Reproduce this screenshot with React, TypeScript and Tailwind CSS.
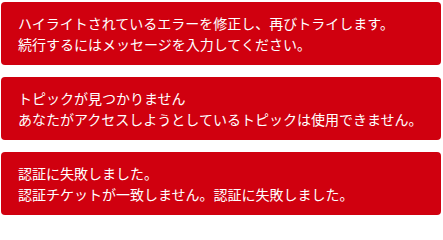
const messages = [
	[
		"ハイライトされているエラーを修正し、再びトライします。",
		"続行するにはメッセージを入力してください。",
	],
	[
		"トピックが見つかりません",
		"あなたがアクセスしようとしているトピックは使用できません。",
	],
	["認証に失敗しました。", "認証チケットが一致しません。認証に失敗しました。"],
];

const App = () => {
	return (
		<div className="w-[443px] h-[216px] bg-white pt-[2px] pl-[1px] pr-[2px] flex flex-col gap-[12px] font-['Noto_Sans_CJK_JP','Noto_Sans',sans-serif] overflow-hidden">
			{messages.map((lines, i) => (
				<div
					key={i}
					className="bg-[#d0000f] text-white rounded-[4px] px-[17px] py-[10.5px] text-[14px] leading-[21px]"
				>
					{lines.map((line, j) => (
						<p key={j}>{line}</p>
					))}
				</div>
			))}
		</div>
	);
};

export default App;
